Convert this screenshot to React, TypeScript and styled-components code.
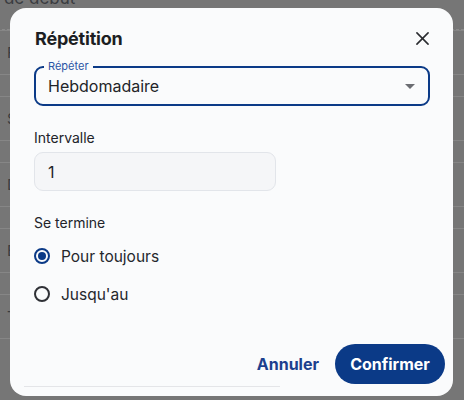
import React, { useState } from 'react';
import styled, { createGlobalStyle } from 'styled-components';

const GlobalStyle = createGlobalStyle`
  html, body {
    margin: 0;
    padding: 0;
    height: 100%;
    overflow: hidden;
  }
  body {
    font-family: Inter, "Noto Sans", "Liberation Sans", sans-serif;
    background: #767676;
  }
`;

const PRIMARY = '#0b3a87';

const Page = styled.div`
  position: relative;
  width: 464px;
  height: 400px;
  overflow: hidden;
  background: #767676;
`;

// dimmed form behind the dialog
const Backdrop = styled.div`
  display: flex;
  flex-direction: column;
  gap: 21px;
  margin-top: -12px;
  color: #3a3c40;
`;

const BackTitle = styled.div`
  font-size: 17px;
  line-height: 20px;
  margin-left: -38px;
  height: 20px;
  border-bottom: 1px dashed #8a8a8a;
  padding-bottom: 21px;
  margin-bottom: -21px;
`;

const BackField = styled.div`
  height: 45px;
  border-top: 1px solid #868686;
  border-bottom: 1px solid #868686;
  display: flex;
  align-items: center;
  padding-left: 7px;
  font-size: 15px;
  box-sizing: border-box;
`;

const Dialog = styled.div`
  position: absolute;
  left: 10px;
  top: 8px;
  width: 443px;
  height: 388px;
  box-sizing: border-box;
  background: #fafbfc;
  border-radius: 16px;
  padding: 16px 23px 0 24px;
  display: flex;
  flex-direction: column;
  color: #1c1e22;
`;

const Header = styled.div`
  height: 28px;
  display: flex;
  align-items: center;
  justify-content: space-between;
`;

const Title = styled.h2`
  margin: 0 0 0 1px;
  font-size: 18px;
  font-weight: 700;
  letter-spacing: -0.2px;
`;

const CloseButton = styled.button`
  border: none;
  background: none;
  padding: 0;
  margin-right: -2px;
  width: 20px;
  height: 20px;
  display: flex;
  align-items: center;
  justify-content: center;
  color: #2a2c30;
  cursor: pointer;
`;

const SelectBox = styled.div`
  position: relative;
  margin-top: 14px;
  height: 40px;
  box-sizing: border-box;
  border: 2px solid ${PRIMARY};
  border-radius: 9px;
  display: flex;
  align-items: center;
  padding: 0 12px 0 12px;
  font-size: 16px;
  color: #222428;
`;

const FloatingLabel = styled.span`
  position: absolute;
  left: 8px;
  top: -8px;
  padding: 0 4px;
  background: #fafbfc;
  font-size: 11px;
  line-height: 13px;
  color: #2c55a5;
`;

const SelectValue = styled.span`
  flex: 1;
`;

const Caret = styled.span`
  width: 0;
  height: 0;
  border-left: 5px solid transparent;
  border-right: 5px solid transparent;
  border-top: 5px solid #6b6d72;
  margin-right: 1px;
`;

const FieldLabel = styled.div<{ $gap: number }>`
  margin-top: ${(p) => p.$gap}px;
  font-size: 14px;
  line-height: 20px;
  color: #22242a;
`;

const TextInput = styled.input`
  margin-top: 4px;
  width: 242px;
  height: 39px;
  box-sizing: border-box;
  border: 1px solid #e2e5ea;
  border-radius: 9px;
  background: #f5f6f8;
  padding: 0 13px;
  font-family: inherit;
  font-size: 16px;
  color: #222428;
  outline: none;
`;

const RadioGroup = styled.div`
  margin-top: 11px;
  display: flex;
  flex-direction: column;
  gap: 14px;
`;

const RadioRow = styled.label`
  height: 24px;
  display: flex;
  align-items: center;
  gap: 11px;
  font-size: 15.5px;
  color: #25272c;
  cursor: pointer;
`;

const RadioDot = styled.span<{ $checked: boolean }>`
  width: 16px;
  height: 16px;
  box-sizing: border-box;
  border-radius: 50%;
  border: 2px solid ${(p) => (p.$checked ? PRIMARY : '#2f3136')};
  display: flex;
  align-items: center;
  justify-content: center;

  &::after {
    content: '';
    width: 8px;
    height: 8px;
    border-radius: 50%;
    background: ${PRIMARY};
    display: ${(p) => (p.$checked ? 'block' : 'none')};
  }
`;

const Footer = styled.div`
  margin-top: auto;
  display: flex;
  justify-content: flex-end;
  align-items: center;
  gap: 16px;
  margin-right: -15px;
`;

const TextButton = styled.button`
  border: none;
  background: none;
  padding: 0;
  font-family: inherit;
  font-size: 16px;
  font-weight: 700;
  color: #1c3f8e;
  cursor: pointer;
`;

const PrimaryButton = styled.button`
  border: none;
  height: 40px;
  width: 110px;
  border-radius: 20px;
  background: ${PRIMARY};
  color: #fff;
  font-family: inherit;
  font-size: 16px;
  font-weight: 700;
  cursor: pointer;
`;

const ScrollEdge = styled.div`
  margin: 2px 0 9px -10px;
  width: 256px;
  height: 1px;
  background: #e4e5e8;
`;

const CloseIcon = () => (
  <svg width="13" height="13" viewBox="0 0 14 14" fill="none">
    <path d="M1 1 13 13M13 1 1 13" stroke="currentColor" strokeWidth="1.7" strokeLinecap="round" />
  </svg>
);

const backFields = ['F', 'S', 'D', 'E', 'T'];

export default function App() {
  const [ending, setEnding] = useState<'forever' | 'until'>('forever');

  return (
    <Page>
      <GlobalStyle />
      <Backdrop>
        <BackTitle>Date de début</BackTitle>
        {backFields.map((letter) => (
          <BackField key={letter}>{letter}</BackField>
        ))}
      </Backdrop>
      <Dialog>
        <Header>
          <Title>Répétition</Title>
          <CloseButton aria-label="Fermer">
            <CloseIcon />
          </CloseButton>
        </Header>
        <SelectBox>
          <FloatingLabel>Répéter</FloatingLabel>
          <SelectValue>Hebdomadaire</SelectValue>
          <Caret />
        </SelectBox>
        <FieldLabel $gap={22}>Intervalle</FieldLabel>
        <TextInput defaultValue="1" />
        <FieldLabel $gap={22}>Se termine</FieldLabel>
        <RadioGroup>
          <RadioRow onClick={() => setEnding('forever')}>
            <RadioDot $checked={ending === 'forever'} />
            Pour toujours
          </RadioRow>
          <RadioRow onClick={() => setEnding('until')}>
            <RadioDot $checked={ending === 'until'} />
            Jusqu'au
          </RadioRow>
        </RadioGroup>
        <Footer>
          <TextButton>Annuler</TextButton>
          <PrimaryButton>Confirmer</PrimaryButton>
        </Footer>
        <ScrollEdge />
      </Dialog>
    </Page>
  );
}
